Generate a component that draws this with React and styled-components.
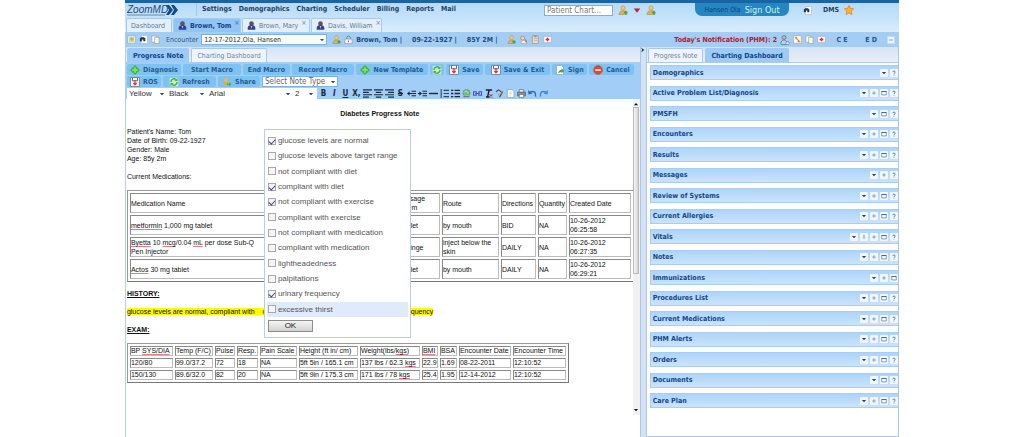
import React, { useState } from 'react';
import styled, { createGlobalStyle } from 'styled-components';

const UI_FONT = "'DejaVu Sans Condensed', 'DejaVu Sans', sans-serif";
const DOC_FONT = "'Liberation Sans', Arial, sans-serif";

const GlobalStyle = createGlobalStyle`
  * { box-sizing: border-box; }
  body {
    margin: 0;
    background: #ffffff;
    font-family: ${UI_FONT};
    font-size: 7px;
    color: #1f4474;
  }
  button, input, select { font-family: inherit; font-size: inherit; color: inherit; }
  button { cursor: pointer; }
  svg { flex: none; }
`;

const Page = styled.div`
  display: flex;
  flex-direction: column;
  width: 75.6%;
  height: 100vh;
  min-height: 437px;
  margin: 0 auto;
`;

const Header = styled.header`
  display: flex;
  align-items: flex-start;
  height: 18px;
  border-top: 3px solid #1864a4;
  background: linear-gradient(#b5dbfa, #c5e2fa);
`;

const Logo = styled.a`
  display: flex;
  align-items: center;
  width: 72px;
  height: 13px;
  padding-left: 2px;
  border-right: 1px solid #9fcaf0;
`;

const Menu = styled.nav`
  display: flex;
  gap: 7px;
  padding-left: 5px;
`;

const MenuLink = styled.a`
  color: #243f66;
  font-weight: 700;
  line-height: 12px;
  text-decoration: none;
`;

const HeaderTools = styled.div`
  display: flex;
  align-items: center;
  gap: 5px;
  height: 14px;
  margin-left: auto;
  padding-right: 45px;
`;

const PatientSearch = styled.input`
  width: 69px;
  height: 11px;
  padding: 0 2px;
  border: 1px solid #85aed3;
  background: #ffffff;
  color: #666666;
  font-size: 8px;
  &::placeholder { color: #777777; opacity: 1; }
`;

const SignOut = styled.div`
  display: flex;
  align-items: center;
  justify-content: center;
  gap: 4px;
  width: 94px;
  height: 13px;
  margin: 0 9px 0 34px;
  align-self: flex-start;
  border-radius: 0 0 7px 7px;
  background: #2586c6;
  color: #0f4470;
  white-space: nowrap;
`;

const SignOutLink = styled.a`
  color: #c9f7df;
  font-size: 9px;
  text-decoration: none;
`;

const DocumentLinks = styled.div`
  display: flex;
  align-items: center;
  gap: 5px;
  padding-left: 6px;
`;

const ChartTabs = styled.nav`
  display: flex;
  align-items: flex-end;
  gap: 1px;
  height: 14px;
  padding-left: 1px;
  background: linear-gradient(#c5e2fa, #dcedfc);
`;

const ChartTab = styled.button`
  display: flex;
  align-items: center;
  gap: 3px;
  width: ${(p) => p.$width};
  height: 14px;
  padding: 0 4px;
  border: 1px solid #a3cbef;
  border-bottom: 0;
  border-radius: 2px 2px 0 0;
  background: ${(p) => (p.$active ? '#91c5f3' : '#e3effb')};
  color: ${(p) => (p.$active ? '#12468a' : '#667991')};
  font-weight: ${(p) => (p.$active ? 700 : 400)};
  white-space: nowrap;
`;

const TabClose = styled.span`
  margin-left: auto;
  align-self: flex-start;
  color: #5e86b0;
  line-height: 9px;
`;

const PatientBar = styled.div`
  display: flex;
  align-items: center;
  gap: 3px;
  height: 15px;
  padding: 0 4px 0 2px;
  background: #a4cdf3;
  white-space: nowrap;
`;

const EncounterLabel = styled.label`
  display: flex;
  align-items: center;
  gap: 3px;
  margin: 0 2px 0 3px;
  color: #30577f;
`;

const SelectBox = styled.span`
  position: relative;
  display: inline-flex;
  width: ${(p) => p.$width};
  height: ${(p) => (p.$plain ? '100%' : '11px')};

  select {
    width: 100%;
    height: 100%;
    padding: 0 10px 0 2px;
    appearance: none;
    border: ${(p) => (p.$plain ? '0' : '1px solid #7fb1dd')};
    border-radius: 0;
    background: ${(p) => p.$background || '#ffffff'};
    color: ${(p) => p.$color || '#333333'};
    font-family: ${(p) => (p.$plain ? DOC_FONT : UI_FONT)};
    font-size: ${(p) => p.$size || '8px'};
  }

  svg {
    position: absolute;
    top: 50%;
    right: 2px;
    margin-top: -3px;
    pointer-events: none;
  }
`;

const PatientText = styled.span`
  margin-right: 7px;
  color: #1d4a82;
  font-weight: 700;
`;

const Notice = styled.strong`
  margin-left: auto;
  color: #c0102c;
`;

const Expander = styled.button`
  width: 26px;
  padding: 0;
  border: 0;
  background: none;
  color: #24568f;
  font-weight: 700;
`;

const Workspace = styled.main`
  display: flex;
  flex: 1;
  min-height: 0;
`;

const NotePane = styled.section`
  display: flex;
  flex: 515;
  min-width: 0;
  flex-direction: column;
  border-left: 1px solid #b2cfec;
`;

const Splitter = styled.div`
  display: flex;
  width: 7px;
  justify-content: center;
  border: 1px solid #a9c8ea;
  border-width: 0 1px;
  background: #d3e2f7;
`;

const DashboardPane = styled.section`
  display: flex;
  flex: 252;
  min-width: 0;
  flex-direction: column;
  border-right: 1px solid #a9c6e2;
  border-bottom: 1px solid #a9c6e2;
`;

const PaneTabs = styled.div`
  display: flex;
  gap: 2px;
  height: 16px;
  padding: 1px 1px 0;
  background: linear-gradient(#d7e3f4, #e7effa);
  border-bottom: 1px solid #a9cbee;
`;

const PaneTab = styled.button`
  padding: 0 5px;
  border: 1px solid #a5c9ed;
  border-bottom: 0;
  border-radius: 2px 2px 0 0;
  background: ${(p) => (p.$active ? '#9bcbf6' : '#edf4fc')};
  color: ${(p) => (p.$active ? '#12468a' : '#72849b')};
  font-weight: ${(p) => (p.$active ? 700 : 400)};
  white-space: nowrap;
`;

const Toolbars = styled.div`
  display: flex;
  flex-direction: column;
  gap: 1px;
  padding-top: 1px;
  background: #a2cdf6;
`;

const Toolbar = styled.div`
  display: flex;
  gap: 2px;
  height: 11px;
  padding-left: 1px;
`;

const ToolButton = styled.button`
  display: flex;
  align-items: center;
  justify-content: center;
  gap: 3px;
  width: ${(p) => p.$width};
  padding: 0;
  border: 0;
  border-radius: 2px;
  background: #7dc2f3;
  color: #285a92;
  font-weight: 700;
  white-space: nowrap;
`;

const FormatGroup = styled.div`
  display: flex;
  width: 190px;
  background: #ffffff;
`;

const FormatButtons = styled.div`
  display: flex;
  gap: 2px;
`;

const FormatButton = styled.button`
  display: grid;
  place-items: center;
  width: 9px;
  padding: 0;
  border: 0;
  background: none;
  color: #1b2b40;
  font-size: 8px;
`;

const Editor = styled.div`
  position: relative;
  display: flex;
  flex: 1;
  min-height: 0;
  background: #ffffff;
  font-family: ${DOC_FONT};
  font-size: 7px;
  line-height: 9px;
  color: #111111;
`;

const Note = styled.article`
  flex: 1;
  min-width: 0;
  padding: 10px 0 0 1px;
`;

const NoteTitle = styled.h1`
  margin: 0 0 9px;
  font-size: inherit;
  text-align: center;
`;

const NoteLines = styled.p`
  margin: 0 0 9px;
`;

const NoteHeading = styled.h2`
  margin: 7px 0 9px;
  font-size: inherit;
  text-decoration: underline;
`;

const Highlight = styled.mark`
  padding-left: ${(p) => (p.$continued ? '8px' : '0')};
  background: #fdf900;
  color: inherit;
`;

const Misspelt = styled.span`
  text-decoration: underline solid #e08080 1px;
`;

const Table = styled.table`
  width: ${(p) => p.$width};
  table-layout: fixed;
  border: 1px solid #999999;
  border-right-color: #777777;
  border-bottom-color: #777777;
  border-spacing: 2px;
  line-height: ${(p) => p.$lineHeight || '9px'};

  th, td {
    height: ${(p) => p.$rowHeight};
    padding: 0;
    border: 1px solid #888888;
    border-right-color: #bbbbbb;
    border-bottom-color: #bbbbbb;
    font-weight: 400;
    text-align: left;
    white-space: ${(p) => (p.$nowrap ? 'nowrap' : 'normal')};
  }
`;

const MedicationName = styled.div`
  max-width: 136px;
`;

const Scrollbar = styled.div`
  display: flex;
  width: 7px;
  height: 316px;
  flex-direction: column;
  align-items: center;
  background: #f1f1f1;
  padding: 2px 0;
`;

const Thumb = styled.div`
  width: 6px;
  height: 167px;
  margin-bottom: auto;
  border: 1px solid #b9b9b9;
  background: linear-gradient(90deg, #f5f5f5, #d5d5d5);
`;

const Popup = styled.form`
  position: absolute;
  top: 30px;
  left: 138px;
  width: 147px;
  padding: 3px 2px 5px;
  border: 1px solid #b5cdee;
  background: #ffffff;
  font-size: 8px;
  color: #555555;
`;

const OptionList = styled.div`
  display: grid;
  grid-auto-rows: 1fr;
  height: 184px;
`;

const Option = styled.label`
  display: flex;
  align-items: center;
  gap: 2px;
  padding-left: 1px;
  background: ${(p) => (p.$current ? '#dfeafb' : 'transparent')};
`;

const Checkbox = styled.input`
  display: grid;
  place-items: center;
  width: 8px;
  height: 8px;
  margin: 0;
  appearance: none;
  border: 1px solid #a7a7ad;
  background: #f5f5f8;

  &:checked::before {
    content: '';
    width: 5px;
    height: 3px;
    border: solid #3c3c78;
    border-width: 0 0 1px 1px;
    transform: rotate(-48deg);
  }
`;

const OkButton = styled.button`
  display: block;
  width: 45px;
  height: 12px;
  margin: 3px 0 0 1px;
  padding: 0;
  border: 1px solid #8c8c8c;
  background: linear-gradient(#f5f5f5, #d2d2d2);
  color: #222222;
  line-height: 10px;
`;

const SectionList = styled.div`
  display: flex;
  flex: 1;
  flex-direction: column;
  justify-content: space-between;
  padding: 2px 0 28px 3px;
`;

const Section = styled.section`
  display: flex;
  align-items: center;
  gap: 2px;
  height: 15px;
  padding-left: 2px;
  border: 1px solid #aaccee;
  border-right: 0;
  background: linear-gradient(#add4fb, #cbe3fd);
`;

const SectionTitle = styled.h2`
  margin: 0 auto 0 0;
  color: #12468a;
  font-size: 7px;
`;

const SectionButton = styled.button`
  display: grid;
  place-items: center;
  width: 8px;
  height: 8px;
  padding: 0;
  border: 0;
  border-radius: 1px;
  background: #f0f7ff;
`;

const DRAWINGS = {
  person: (
    <>
      <circle cx="5" cy="3" r="2.2" fill="#f3c86c" stroke="#b78a34" strokeWidth=".5" />
      <path d="M1 9.500c0-5 8-5 8 0z" fill="#dcb35c" stroke="#9c7b3b" strokeWidth=".5" />
      <path d="M6 7.500h3.500M7.800 5.800v3.500" stroke="#3fa63b" strokeWidth="1.500" />
    </>
  ),
  patient: (
    <>
      <circle cx="5" cy="3" r="2.600" fill="#6a4a5e" />
      <path d="M.8 9.800V7.500c0-4 8.400-4 8.400 0v2.300z" fill="#2e3f9b" />
      <path d="M4 5.500l1 3 1-3z" fill="#d9b7a6" />
    </>
  ),
  nurse: (
    <>
      <circle cx="4" cy="2.500" r="2" fill="#d2b08c" stroke="#47719f" strokeWidth=".7" />
      <path d="M1 9.500V7q3-4 6 0v2.500z" fill="#b7d1ec" stroke="#47719f" strokeWidth=".7" />
      <path d="M6 7h3v2.500H6z" fill="#fff" stroke="#47719f" strokeWidth=".6" />
    </>
  ),
  page: (
    <>
      <path d="M1.500.7h5.500l1.800 1.800v6.800H1.500z" fill="#fff" stroke="#8998a9" strokeWidth=".7" />
      <path d="M3.300 3.500h3.500M3.300 5.300h3.500M3.300 7h2" stroke="#b0b8c4" strokeWidth=".6" />
    </>
  ),
  photo: (
    <>
      <path d="M.8 1h8.400v8H.8z" fill="#fff" stroke="#88a2bd" strokeWidth=".7" />
      <path d="M2 2.200h6v5.600H2z" fill="#b9e0a5" />
      <circle cx="5.500" cy="4.500" r="1.800" fill="#eda13b" />
    </>
  ),
  find: (
    <>
      <path d="M2.500.6h7v8.800h-7z" fill="#fff" stroke="#9cabbd" strokeWidth=".6" />
      <path d="M1 7V4l1.500-1.500h3L7 4v3H4.800V5H3.200v2z" fill="#1f3454" />
    </>
  ),
  copy: (
    <>
      <path d="M1 1h5v7H1z" fill="#fff" stroke="#9a9a8c" strokeWidth=".7" />
      <path d="M4 2.500h5v7H4z" fill="#f8f7ee" stroke="#9a9a8c" strokeWidth=".7" />
    </>
  ),
  edit: (
    <>
      <path d="M.8.8h8.400v8.400H.8z" fill="#fff" stroke="#bd9790" strokeWidth=".7" />
      <path d="M2.500 2.500l5 5M2.500 2.500h2M5 7.500h3" stroke="#d28a31" strokeWidth="1.300" />
    </>
  ),
  lock: (
    <>
      <path d="M3 5V3.200a2 2 0 014 0V5" fill="none" stroke="#75818d" />
      <path d="M1 4.500h8v5H1z" fill="#f7f7f3" stroke="#8c939a" strokeWidth=".7" />
      <path d="M5 6v2" stroke="#666" />
    </>
  ),
  medkit: (
    <>
      <path d="M.8 1.500h8.400v7H.8z" fill="#fff" stroke="#a9a5ad" strokeWidth=".7" />
      <path d="M3 5h4M5 3v4" stroke="#dc2630" strokeWidth="1.600" />
    </>
  ),
  clip: (
    <>
      <path d="M1.500 1h6.500v8.500H1.500z" fill="#f0dfc5" stroke="#a98563" strokeWidth=".7" />
      <path d="M3.500.7h2.500v1.500H3.500zM3 4h4M3 6h4" fill="#909090" stroke="#999" strokeWidth=".6" />
    </>
  ),
  call: (
    <>
      <circle cx="4" cy="3.500" r="2.200" fill="#f4d5b2" stroke="#ae7044" strokeWidth=".7" />
      <path d="M2 9.500q0-4 4-3.500l3 3.500z" fill="#f3f0e7" stroke="#b69262" strokeWidth=".6" />
      <path d="M7 5l1.500 3" stroke="#d73833" />
    </>
  ),
  plus: (
    <>
      <path d="M5 0l5 5-5 5-5-5z" fill="#42b736" />
      <path d="M5 2.300v5.400M2.300 5h5.400" stroke="#80df64" strokeWidth="1.800" />
    </>
  ),
  save: (
    <>
      <path d="M.5.5h9v9h-9z" fill="#f7f7fb" stroke="#68778f" strokeWidth=".8" />
      <path d="M2.500.8v3h5v-3" fill="none" stroke="#5f6776" strokeWidth="1" />
      <path d="M5 3v5M3.300 6L5 7.800 6.700 6" fill="none" stroke="#df3537" strokeWidth="1.200" />
    </>
  ),
  refresh: (
    <>
      <path d="M.7.7h8.600v8.600H.7z" fill="#c9ecc9" />
      <path d="M2 5a3 3 0 015-2.500M8 5a3 3 0 01-5 2.500" fill="none" stroke="#3fae4b" strokeWidth="1.400" />
      <path d="M8.500 1v3h-3zM1.500 9V6h3z" fill="#3fae4b" />
    </>
  ),
  share: (
    <>
      <circle cx="4" cy="3" r="2" fill="#eeb84c" />
      <path d="M.7 8c0-4 6.500-4 6.500 0z" fill="#e6a744" />
      <path d="M5 6.500h2v-1.500L9.700 7.300 7 9.600V8H5z" fill="#4eb24c" />
    </>
  ),
  sign: (
    <>
      <path d="M1.500.5h5l2 2v7h-7z" fill="#fff" stroke="#8ea0b6" strokeWidth=".7" />
      <path d="M2.500 8l2.500-3h1.500V3.500L9.500 6 6.500 8.200V7z" fill="#45ac48" />
    </>
  ),
  cancel: (
    <>
      <circle cx="5" cy="5" r="4.400" fill="#e5472e" stroke="#bd3623" strokeWidth=".5" />
      <path d="M2.300 5h5.400" stroke="#fff" strokeWidth="1.600" />
    </>
  ),
  star: (
    <path
      d="M5 .4l1.400 3 3.300.4-2.400 2.300.6 3.400L5 7.900 2.100 9.500l.6-3.400L.3 3.800l3.300-.4z"
      fill="#fcb32c"
      stroke="#d97f16"
      strokeWidth=".7"
    />
  ),
  redDown: <path d="M1 3h8L5 8.500z" fill="#b9232d" />,
  down: <path d="M1.500 3.500h7L5 7z" fill="currentColor" />,
  up: <path d="M1.500 7h7L5 3.500z" fill="currentColor" />,
  right: <path d="M2 1l5 4-5 4 1.500-4z" fill="#20374f" />,
  add: <path d="M2 5h6M5 2v6" stroke="#6389b0" strokeWidth="1.200" />,
  pin: <path d="M3.500 2h3M4 2v4M6 2v4M2.500 6h5M5 6v3" stroke="#8aaaca" />,
  window: (
    <>
      <path d="M1.200 2.500h7.600v5.700H1.200z" fill="#fff" stroke="#355f8e" />
      <path d="M1 2.600h8" stroke="#355f8e" strokeWidth="1.400" />
    </>
  ),
  help: (
    <path d="M3 3.500C3 1 7 1 7 3.500 7 5 5 5 5 6.800M5 7.800v1.400" fill="none" stroke="#355f8e" strokeWidth="1.200" />
  ),
  collapse: (
    <>
      <path d="M.7.7h8.600v8.600H.7z" fill="#eef6ff" stroke="#c7def5" />
      <path d="M2.500 5h5" stroke="#7192b5" />
    </>
  ),
  alignLeft: <path d="M0 1h10M0 3.700h6.500M0 6.400h10M0 9h6.500" stroke="currentColor" strokeWidth="1.300" />,
  alignCenter: <path d="M0 1h10M2 3.700h6M0 6.400h10M2 9h6" stroke="currentColor" strokeWidth="1.300" />,
  alignRight: <path d="M0 1h10M3.500 3.700H10M0 6.400h10M3.500 9H10" stroke="currentColor" strokeWidth="1.300" />,
  outdent: (
    <>
      <path d="M0 5l3-2.500v5z" fill="currentColor" />
      <path d="M2 5h3M5 2.500h5M5 5h5M5 7.500h5" stroke="currentColor" strokeWidth="1.300" />
    </>
  ),
  indent: (
    <>
      <path d="M4.500 5l-3-2.500v5z" fill="currentColor" />
      <path d="M0 5h3M5 2.500h5M5 5h5M5 7.500h5" stroke="currentColor" strokeWidth="1.300" />
    </>
  ),
  rule: <path d="M0 5h10" stroke="currentColor" strokeWidth="1.600" />,
  ordered: <path d="M1.300 0v10M4 1.500h6M4 5h6M4 8.500h6" stroke="#34465e" strokeWidth="1.200" />,
  bullets: (
    <path d="M0 1.500h2.500M0 5h2.500M0 8.500h2.500M4 1.500h6M4 5h6M4 8.500h6" stroke="currentColor" strokeWidth="1.500" />
  ),
  globe: (
    <>
      <circle cx="5" cy="4.500" r="4" fill="#73bd76" stroke="#47855d" strokeWidth=".6" />
      <path d="M2 4q3-4 5 1M1 8h8" fill="none" stroke="#d8ecdf" />
      <path d="M1.500 8.500h7" stroke="#6b7582" strokeWidth="1.300" />
    </>
  ),
  link: (
    <path d="M.5 3h3v4h-3zM6.500 3h3v4h-3zM2.500 5h5" fill="none" stroke="#4250b6" strokeWidth="1.200" />
  ),
  clear: (
    <>
      <path d="M2 1.200h7M5.700 1L4 8.800M2.200 8.800h4" stroke="#17212e" strokeWidth="1.600" />
      <path d="M6 6l3.500 3.500M9.500 6L6 9.500" stroke="#d32e39" strokeWidth="1.200" />
    </>
  ),
  source: (
    <>
      <path d="M1 3l3-2 4 3-3 5" fill="none" stroke="#444" strokeWidth="1.200" />
      <path d="M3 5l2 2 4-5" fill="none" stroke="#b08a42" />
    </>
  ),
  printer: (
    <>
      <path d="M2.500.8h5v3h-5z" fill="#fff" stroke="#56656e" strokeWidth=".8" />
      <path d="M.7 3.500h8.600v4H.7z" fill="#8b9a9e" stroke="#48575c" strokeWidth=".8" />
      <path d="M2.500 6h5v3.300h-5z" fill="#fff" stroke="#56656e" strokeWidth=".8" />
    </>
  ),
  undo: (
    <>
      <path d="M2 3.500q7-3 6.500 5" fill="none" stroke="#3565c2" strokeWidth="1.600" />
      <path d="M0 1l.5 5 4.500-1z" fill="#3565c2" />
    </>
  ),
  redo: (
    <>
      <path d="M8 3.500q-7-3-6.500 5" fill="none" stroke="#4286d1" strokeWidth="1.600" />
      <path d="M10 1l-.5 5L5 5z" fill="#4286d1" />
    </>
  ),
};

function Icon({ name, size = 9 }) {
  return (
    <svg width={size} height={size} viewBox="0 0 10 10" aria-hidden="true">
      {DRAWINGS[name]}
    </svg>
  );
}

function Select({ label, value, ...box }) {
  return (
    <SelectBox {...box}>
      <select aria-label={label} defaultValue={value}>
        <option>{value}</option>
      </select>
      <Icon name="down" size={6} />
    </SelectBox>
  );
}

const MENU = ['Settings', 'Demographics', 'Charting', 'Scheduler', 'Billing', 'Reports', 'Mail'];

const NOTE_TOOLS = [
  ['Diagnosis', 'plus', '54px'],
  ['Start Macro', null, '58px'],
  ['End Macro', null, '47px'],
  ['Record Macro', null, '62px'],
  ['New Template', 'plus', '72px'],
  ['', 'refresh', '14px'],
  ['Save', 'save', '37px'],
  ['Save & Exit', 'save', '65px'],
  ['Sign', 'sign', '35px'],
  ['Cancel', 'cancel', '45px'],
];

const SHARE_TOOLS = [
  ['ROS', 'save', '34px'],
  ['Refresh', 'refresh', '53px'],
  ['Share', 'share', '42px'],
];

const FORMAT_TOOLS = [
  'alignLeft', 'alignCenter', 'alignRight', 'strike', 'outdent', 'indent', 'rule', 'ordered',
  'bullets', 'globe', 'link', 'clear', 'source', 'page', 'printer', 'undo', 'redo',
];

const MEDICATIONS = [
  [<><Misspelt>metformin</Misspelt> 1,000 mg tablet</>, 'tablet', 'by mouth', 'BID', '10-26-2012 06:25:58'],
  [
    <><Misspelt>Byetta</Misspelt> 10 <Misspelt>mcg</Misspelt>/0.04 <Misspelt>mL</Misspelt> per dose Sub-Q Pen Injector</>,
    'syringe', 'inject below the skin', 'DAILY', '10-26-2012 06:27:35',
  ],
  [<><Misspelt>Actos</Misspelt> 30 mg tablet</>, 'tablet', 'by mouth', 'DAILY', '10-26-2012 06:29:21'],
];

const EXAM_COLUMNS = [
  [<>BP <Misspelt>SYS/DIA</Misspelt></>, 45], ['Temp (F/C)', 40], ['Pulse', 22], ['Resp.', 23],
  ['Pain Scale', 39], ['Height (ft in/ cm)', 61], [<>Weight(lbs/<Misspelt>kgs</Misspelt>)</>, 62],
  [<Misspelt>BMI</Misspelt>, 18], ['BSA', 19], ['Encounter Date', 54], ['Encounter Time', 55],
];

const EXAMS = [
  ['120/80', '99.0/37.2', '72', '18', 'NA', '5ft 5in / 165.1 cm', <>137 lbs / 62.3 <Misspelt>kgs</Misspelt></>, '22.9', '1.69', '08-22-2011', '12:10:52'],
  ['150/130', '89.6/32.0', '82', '20', 'NA', '5ft 9in / 175.3 cm', <>171 lbs / 78 <Misspelt>kgs</Misspelt></>, '25.4', '1.95', '12-14-2012', '12:10:52'],
];

const FINDINGS = [
  ['glucose levels are normal', true],
  ['glucose levels above target range', false],
  ['not compliant with diet', false],
  ['compliant with diet', true],
  ['not compliant with exercise', true],
  ['compliant with exercise', false],
  ['not compliant with medication', false],
  ['compliant with medication', false],
  ['lightheadedness', false],
  ['palpitations', false],
  ['urinary frequency', true],
  ['excessive thirst', false],
];

const FULL = ['down', 'add', 'window', 'help'];
const SECTIONS = [
  ['Demographics', ['down', 'help']],
  ['Active Problem List/Diagnosis', FULL],
  ['PMSFH', ['down', 'window', 'help']],
  ['Encounters', FULL],
  ['Results', FULL],
  ['Messages', ['down', 'add', 'help']],
  ['Review of Systems', FULL],
  ['Current Allergies', FULL],
  ['Vitals', ['down', 'pin', 'add', 'window', 'help']],
  ['Notes', FULL],
  ['Immunizations', ['down', 'add', 'window']],
  ['Procedures List', FULL],
  ['Current Medications', FULL],
  ['PHM Alerts', FULL],
  ['Orders', FULL],
  ['Documents', ['down', 'window', 'help']],
  ['Care Plan', FULL],
];

function TopBar() {
  return (
    <Header>
      <Logo href="#" aria-label="ZoomMD">
        <svg width="51" height="12" viewBox="0 0 51 12">
          <text x="0" y="9" fontFamily="Liberation Sans" fontStyle="italic" fontSize="10" fill="#23486f">
            ZoomMD
          </text>
          <path d="M0 11h38" stroke="#3d6994" strokeWidth=".7" />
          <path d="M39 1h3l4 5-4 5h-3l3-5zM44 1h3l4 5-4 5h-3l3-5z" fill="#154b86" />
        </svg>
      </Logo>
      <Menu>
        {MENU.map((item) => <MenuLink key={item} href="#">{item}</MenuLink>)}
      </Menu>
      <HeaderTools>
        <PatientSearch aria-label="Patient chart" placeholder="Patient Chart..." />
        <Icon name="person" size={10} />
        <Icon name="redDown" size={8} />
        <Icon name="person" size={10} />
        <SignOut>
          Hansen Ola
          <SignOutLink href="#">Sign Out</SignOutLink>
        </SignOut>
        <Icon name="find" />
        <DocumentLinks>
          <MenuLink href="#">DMS</MenuLink>
          <Icon name="star" size={10} />
        </DocumentLinks>
      </HeaderTools>
    </Header>
  );
}

function PatientStrip() {
  return (
    <PatientBar>
      <Icon name="photo" />
      <Icon name="find" />
      <Icon name="copy" />
      <EncounterLabel>
        Encounter
        <Select label="Encounter" value="12-17-2012,Ola, Hansen" $width="126px" $size="7px" $background="#fbfbf4" />
      </EncounterLabel>
      <Icon name="person" />
      <Icon name="lock" />
      <PatientText>Brown, Tom |</PatientText>
      <PatientText>09-22-1927 |</PatientText>
      <PatientText>85Y 2M |</PatientText>
      <Icon name="person" />
      <Icon name="call" />
      <Icon name="clip" />
      <Icon name="medkit" />
      <Notice>Today&apos;s Notification (PHM): 2</Notice>
      <Icon name="nurse" size={10} />
      <Icon name="edit" />
      <Icon name="copy" />
      <Icon name="medkit" />
      <Expander>C E</Expander>
      <Expander>E D</Expander>
      <Icon name="collapse" size={8} />
    </PatientBar>
  );
}

function ToolButtons({ tools }) {
  return tools.map(([label, icon, width], i) => (
    <ToolButton key={i} $width={width} aria-label={label || 'Reload'}>
      {icon && <Icon name={icon} size={10} />}
      {label}
    </ToolButton>
  ));
}

function NoteToolbars() {
  return (
    <Toolbars>
      <Toolbar><ToolButtons tools={NOTE_TOOLS} /></Toolbar>
      <Toolbar>
        <ToolButtons tools={SHARE_TOOLS} />
        <Select label="Note type" value="Select Note Type" $width="76px" $color="#666666" />
      </Toolbar>
      <Toolbar>
        <FormatGroup>
          <Select label="Highlight" value="Yellow" $plain $width="40px" />
          <Select label="Text colour" value="Black" $plain $width="40px" />
          <Select label="Font" value="Arial" $plain $width="86px" />
          <Select label="Size" value="2" $plain $width="23px" />
        </FormatGroup>
        <FormatButtons>
          <FormatButton><b>B</b></FormatButton>
          <FormatButton><b><i>I</i></b></FormatButton>
          <FormatButton><b><u>U</u></b></FormatButton>
          <FormatButton><b>X,</b></FormatButton>
          {FORMAT_TOOLS.map((name) => (
            <FormatButton key={name} aria-label={name}>
              {name === 'strike' ? <b><s>S</s></b> : <Icon name={name} />}
            </FormatButton>
          ))}
        </FormatButtons>
      </Toolbar>
    </Toolbars>
  );
}

function MedicationTable() {
  return (
    <Table $width="507px" $rowHeight="20px">
      <colgroup>
        <col />
        <col width="40" />
        <col width="57" />
        <col width="35" />
        <col width="29" />
        <col width="62" />
      </colgroup>
      <thead>
        <tr>
          <th>Medication Name</th>
          <th>Dosage<br />Form</th>
          <th>Route</th>
          <th>Directions</th>
          <th>Quantity</th>
          <th>Created Date</th>
        </tr>
      </thead>
      <tbody>
        {MEDICATIONS.map(([name, form, route, directions, created]) => (
          <tr key={created}>
            <td><MedicationName>{name}</MedicationName></td>
            <td>{form}</td>
            <td>{route}</td>
            <td>{directions}</td>
            <td>NA</td>
            <td>{created}</td>
          </tr>
        ))}
      </tbody>
    </Table>
  );
}

function ExamTable() {
  return (
    <Table $width="440px" $rowHeight="10px" $lineHeight="8px" $nowrap>
      <colgroup>
        {EXAM_COLUMNS.map(([, width], i) => <col key={i} width={width - 2} />)}
      </colgroup>
      <thead>
        <tr>{EXAM_COLUMNS.map(([title], i) => <th key={i}>{title}</th>)}</tr>
      </thead>
      <tbody>
        {EXAMS.map((row) => (
          <tr key={row[0]}>{row.map((cell, i) => <td key={i}>{cell}</td>)}</tr>
        ))}
      </tbody>
    </Table>
  );
}

function FindingsPopup() {
  const [checked, setChecked] = useState(FINDINGS.map(([, on]) => on));
  const toggle = (i) => setChecked(checked.map((on, j) => (i === j ? !on : on)));

  return (
    <Popup onSubmit={(e) => e.preventDefault()}>
      <OptionList>
        {FINDINGS.map(([label], i) => (
          <Option key={label} $current={i === FINDINGS.length - 1}>
            <Checkbox type="checkbox" checked={checked[i]} onChange={() => toggle(i)} />
            {label}
          </Option>
        ))}
      </OptionList>
      <OkButton type="submit">OK</OkButton>
    </Popup>
  );
}

function App() {
  return (
    <Page>
      <GlobalStyle />
      <TopBar />
      <ChartTabs>
        <ChartTab $width="46px">Dashboard</ChartTab>
        <ChartTab $active $width="68px"><Icon name="patient" />Brown, Tom<TabClose>×</TabClose></ChartTab>
        <ChartTab $width="68px"><Icon name="patient" />Brown, Mary<TabClose>×</TabClose></ChartTab>
        <ChartTab $width="71px"><Icon name="patient" />Davis, William<TabClose>×</TabClose></ChartTab>
      </ChartTabs>
      <PatientStrip />
      <Workspace>
        <NotePane>
          <PaneTabs>
            <PaneTab $active>Progress Note</PaneTab>
            <PaneTab>Charting Dashboard</PaneTab>
          </PaneTabs>
          <NoteToolbars />
          <Editor>
            <Note>
              <NoteTitle>Diabetes Progress Note</NoteTitle>
              <NoteLines>
                Patient&apos;s Name: Tom<br />
                Date of Birth: 09-22-1927<br />
                Gender: Male<br />
                Age: 85y 2m
              </NoteLines>
              <NoteLines>Current Medications:</NoteLines>
              <MedicationTable />
              <NoteHeading>HISTORY:</NoteHeading>
              <NoteLines>
                <Highlight>glucose levels are normal, compliant with</Highlight>
                <Highlight $continued>diet, not compliant with exercise, and urinary frequency</Highlight>
              </NoteLines>
              <NoteHeading>EXAM:</NoteHeading>
              <ExamTable />
            </Note>
            <Scrollbar>
              <Icon name="up" size={6} />
              <Thumb />
              <Icon name="down" size={6} />
            </Scrollbar>
            <FindingsPopup />
          </Editor>
        </NotePane>
        <Splitter><Icon name="right" size={6} /></Splitter>
        <DashboardPane>
          <PaneTabs>
            <PaneTab>Progress Note</PaneTab>
            <PaneTab $active>Charting Dashboard</PaneTab>
          </PaneTabs>
          <SectionList>
            {SECTIONS.map(([title, buttons]) => (
              <Section key={title}>
                <SectionTitle>{title}</SectionTitle>
                {buttons.map((name) => (
                  <SectionButton key={name} aria-label={`${title} ${name}`}>
                    <Icon name={name} size={6} />
                  </SectionButton>
                ))}
              </Section>
            ))}
          </SectionList>
        </DashboardPane>
      </Workspace>
    </Page>
  );
}

export default App;
